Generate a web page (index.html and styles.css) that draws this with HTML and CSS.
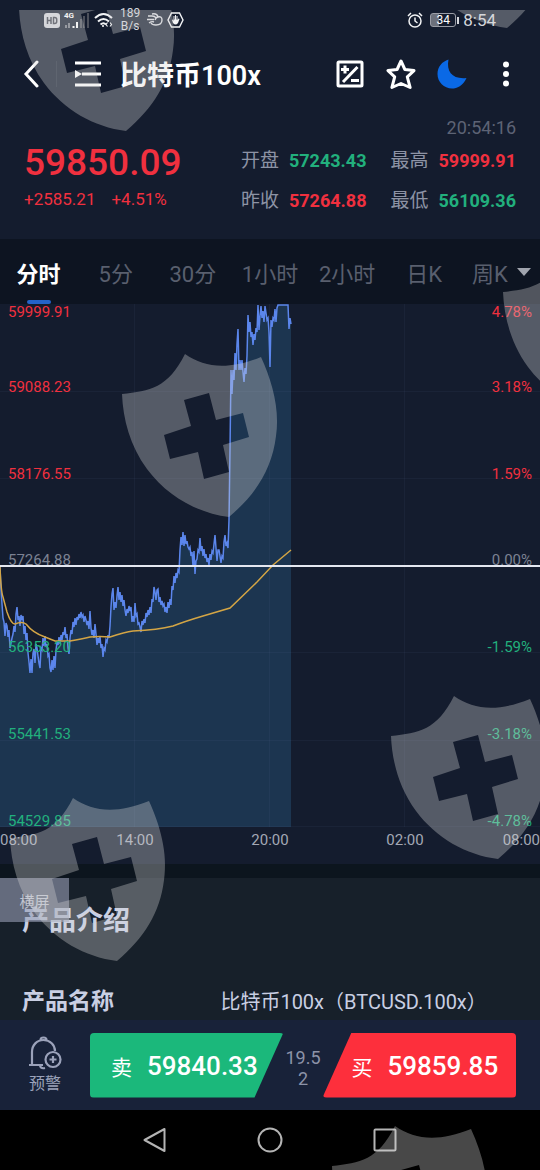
FILE: index.html
```html
<!DOCTYPE html>
<html lang="zh-CN">
<head>
<meta charset="UTF-8" />
<meta name="viewport" content="width=device-width, initial-scale=1" />
<title>比特币100x</title>
<link rel="stylesheet" href="styles.css">
</head>
<body>
<div class="app">
    <div class="status-bar">
        <svg class="status-icon" width="16" height="15" viewBox="0 0 16 15">
            <rect width="16" height="15" rx="3" fill="#d5d7dc" />
            <path d="M3.500 4v7M7 4v7M3.500 7.500H7M9.500 4.500v6h1.200q2 0 2-2v-2q0-2-2-2z" fill="none" stroke="#3d414c" stroke-width="1.500" />
        </svg>
        <div class="signal">
            <span>4G</span>
            <svg width="26" height="17" viewBox="0 0 26 17">
                <path d="M2 13v3M5 11v5" stroke="#777b85" stroke-width="2" />
                <path d="M9.500 14v2M13 10v6" stroke="#fff" stroke-width="2" />
                <path d="M17 7v9M20 4v12M24 1v15" stroke="#4d515c" stroke-width="2" />
            </svg>
        </div>
        <svg class="status-icon" width="19" height="16" viewBox="0 0 19 16" fill="none" stroke="#f2f3f5" stroke-width="2">
            <path d="M1 6Q9.500-2 18 6M4 9.500q5.500-5 11 0M6.500 12.500q3-2.500 5.500 0" />
            <circle cx="9" cy="14" r="1" fill="#fff" stroke="none" />
            <path d="M13.500 10.500l-1.500 2 1.500 2M16 10.500l1.500 2-1.500 2" stroke-width="1.200" />
        </svg>
        <div class="net-speed">189<br>B/s</div>
        <svg class="status-icon" width="16" height="14" viewBox="0 0 16 14" fill="none" stroke="#d9dbe0" stroke-width="1.400">
            <path d="M1 3h4q3 0 4 2M0 6.500h7M2 10q3-2 5-1M5 1q5-1 6 3 4-1 4 3 0 5-6 5-4 0-5-2M11 4q-2 0-3 3" />
        </svg>
        <svg class="status-icon" width="17" height="16" viewBox="0 0 17 16">
            <path d="M4.500 1h8L16 8l-3.500 7h-8L1 8z" fill="none" stroke="#f2f3f5" stroke-width="1.400" />
            <path d="M5 8l1 3q2.500 3 5 0l1.500-4-1-.500-1 1.500V4h-1v3.500H9V3H8v4.500h-.500V4h-1v5L6 7.500z" fill="#f2f3f5" />
        </svg>
        <div class="status-right">
            <svg width="16" height="16" viewBox="0 0 16 16" fill="none" stroke="#f2f3f5" stroke-width="1.500">
                <circle cx="8" cy="9" r="6" />
                <path d="M8 5.500V9l2.500 2M1 4l3-3M12 1l3 3" />
            </svg>
            <div class="battery"><span>34</span></div>
            <span class="clock">8:54</span>
        </div>
    </div>

    <header class="title-bar">
        <button class="icon-btn" aria-label="返回">
            <svg width="16" height="28" viewBox="0 0 16 28"><path d="M14 2L3 14l11 12" fill="none" stroke="#fff" stroke-width="3" stroke-linecap="round" /></svg>
        </button>
        <span class="divider"></span>
        <button class="icon-btn" aria-label="列表">
            <svg width="28" height="26" viewBox="0 0 28 26"><path d="M1 2h26M8 13h19M1 24h26" stroke="#fff" stroke-width="3" /><path d="M1 9l7 4-7 4z" fill="#fff" /></svg>
        </button>
        <h1>比特币100x</h1>
        <div class="tools">
            <button class="icon-btn" aria-label="点差">
                <svg width="28" height="28" viewBox="0 0 28 28" fill="none" stroke="#fff" stroke-width="3">
                    <rect x="2" y="2" width="24" height="24" rx="1" />
                    <path d="M7 22L21.500 7M5 9.500h8M9 5.500v8M15 20.500h8" />
                </svg>
            </button>
            <button class="icon-btn" aria-label="收藏">
                <svg width="30" height="31" viewBox="0 0 30 31"><path d="M15 2l3.900 8.500 9.100 1.100-6.700 6.300 2.800 10.600L15 24.500l-9.100 4 2.800-10.600L2 11.600l9.100-1.100z" fill="none" stroke="#fff" stroke-width="3" stroke-linejoin="round" /></svg>
            </button>
            <button class="icon-btn" aria-label="夜间模式">
                <svg width="30" height="30" viewBox="0 0 30 30"><path d="M11.500.500C9 13 16 20.500 29.500 19 26 27 20 29.500 15 29.500 7 29.500.500 23 .500 15 .500 8 5 2.500 11.500.500z" fill="#0a69e6" /></svg>
            </button>
            <button class="icon-btn more" aria-label="更多">
                <svg width="6" height="26" viewBox="0 0 6 26" fill="#fff"><circle cx="3" cy="3.500" r="3" /><circle cx="3" cy="13" r="3" /><circle cx="3" cy="22.500" r="3" /></svg>
            </button>
        </div>
    </header>

    <section class="quote">
        <div class="quote-time">20:54:16</div>
        <div class="quote-body">
            <div class="last">
                <div class="last-price">59850.09</div>
                <div class="last-change"><span>+2585.21</span><span>+4.51%</span></div>
            </div>
            <dl class="stats">
                <dt>开盘</dt><dd class="up">57243.43</dd>
                <dt>最高</dt><dd class="down">59999.91</dd>
                <dt>昨收</dt><dd class="down">57264.88</dd>
                <dt>最低</dt><dd class="up">56109.36</dd>
            </dl>
        </div>
    </section>

    <nav class="tabs">
        <button class="tab active">分时</button>
        <button class="tab">5分</button>
        <button class="tab">30分</button>
        <button class="tab">1小时</button>
        <button class="tab">2小时</button>
        <button class="tab">日K</button>
        <button class="tab">周K<i class="caret"></i></button>
    </nav>

    <section class="chart">
        <div class="plot">
            <div class="scale">
                <div class="band first">
                    <div class="pair down"><span>59999.91</span><span>4.78%</span></div>
                    <div class="pair down"><span>59088.23</span><span>3.18%</span></div>
                </div>
                <div class="band"><div class="pair down"><span>58176.55</span><span>1.59%</span></div></div>
                <div class="band"><div class="pair flat"><span>57264.88</span><span>0.00%</span></div></div>
                <div class="band"><div class="pair up"><span>56353.20</span><span>-1.59%</span></div></div>
                <div class="band"><div class="pair up"><span>55441.53</span><span>-3.18%</span></div></div>
                <div class="band"><div class="pair up"><span>54529.85</span><span>-4.78%</span></div></div>
            </div>
            <svg class="lines" viewBox="0 0 540 523" preserveAspectRatio="none">
                <path class="area" id="area" />
                <path class="grid" d="M0 87.500H540M0 174.500H540M0 348.500H540M0 436.500H540M0 522.500H540M134.500 0V523M269.500 0V523M404.500 0V523" />
                <path class="price-line" id="priceLine" />
                <path class="average" d="M0 263Q1 288 3 293L7 308Q11 320 15 320 22 317 26 320 33 329 45 333L55 337H70Q82 335 90 333 100 332 110 333 125 328 133 327 158 326 173 322 186 317 203 312L230 304 257 278 273 261 291 246" />
                <path class="zero" d="M0 262H540" />
            </svg>
        </div>
        <div class="hours">
            <span>08:00</span><span>14:00</span><span>20:00</span><span>02:00</span><span>08:00</span>
        </div>
    </section>

    <section class="product">
        <button class="rotate-btn">横屏</button>
        <h2>产品介绍</h2>
        <div class="product-row">
            <span class="product-label">产品名称</span>
            <span>比特币100x（BTCUSD.100x）</span>
        </div>
    </section>

    <footer class="trade-bar">
        <button class="alert-btn">
            <svg width="34" height="34" viewBox="0 0 34 34" fill="none" stroke="#9ba2ba" stroke-width="2.200">
                <path d="M1 29h14M4 29V16C4 9 9 4 15.500 4S27 9 27 15M12.500 4q0-2.500 3-2.500t3 2.500M12 30q1 3 5 2" />
                <circle cx="25" cy="23.500" r="7.500" />
                <path d="M25 20v7M21.500 23.500h7" />
            </svg>
            <span>预警</span>
        </button>
        <button class="trade sell"><span>卖</span><b>59840.33</b></button>
        <div class="spread">19.52</div>
        <button class="trade buy"><span>买</span><b>59859.85</b></button>
    </footer>

    <div class="system-nav">
        <svg width="24" height="26" viewBox="0 0 24 26"><path d="M21.500 2v22L1.500 13z" /></svg>
        <svg width="26" height="26" viewBox="0 0 26 26"><circle cx="13" cy="13" r="11.500" /></svg>
        <svg width="24" height="24" viewBox="0 0 24 24"><rect x="1.500" y="1.500" width="21" height="21" rx="1" /></svg>
    </div>

    <svg class="watermark" viewBox="0 0 540 1170" aria-hidden="true">
        <defs>
            <path id="shield" fill-rule="evenodd" d="M0 40C28 37 46 34 63 0 83 14 107 16 139 3 150 27 158 55 154 82 150 115 134 140 107 163 75 159 45 142 25 115 8 92 1 65 0 40zM62 46L69 72 42 81 48 105 76 98 82 125 107 118 101 91 127 83 121 59 94 66 87 39z" />
            <clipPath id="page"><rect y="10" width="540" height="1160" /></clipPath>
        </defs>
        <g clip-path="url(#page)">
            <use href="#shield" x="19" y="-32" />
            <use href="#shield" x="400" y="-135" />
            <use href="#shield" x="503" y="252" />
            <use href="#shield" x="122" y="354" />
            <use href="#shield" x="391" y="696" />
            <use href="#shield" x="10" y="798" />
            <use href="#shield" x="332" y="1126" />
        </g>
    </svg>
</div>

<script>
// x y pairs of the intraday price
const points = [
    '0 263 1 285 2 300 3 314 4 318 5 332 6 319 7 322 8 333 9 326 10 344 12 334 13 330 14 322 15 328 16 310 17 303 18 316 19 312 20 322',
    '21 311 22 316 23 312 24 330 25 322 26 336 27 329 28 349 29 358 30 369 31 355 32 369 33 349 34 345 35 359 36 340 37 344 38 352',
    '39 359 40 364 41 344 42 346 43 334 44 342 45 332 46 343 47 340 48 352 49 350 50 364 51 368 52 356 53 366 54 352 55 364 56 346',
    '57 338 58 341 59 333 60 340 61 331 62 336 63 328 64 331 65 323 66 334 67 330 68 344 69 350 70 334 71 326 72 330 73 318 74 323',
    '75 314 76 321 77 313 78 316 79 310 80 314 81 308 82 313 83 311 84 318 85 312 86 316 87 321 88 317 89 325 90 307 91 324 92 331',
    '93 326 94 334 95 320 96 330 97 341 98 334 99 339 100 332 101 344 102 340 103 353 104 344 105 346 106 336 107 338 108 331 109 334',
    '110 322 111 303 112 290 113 284 114 306 115 298 116 304 117 292 118 283 119 296 120 288 121 298 122 291 123 302 124 296 125 306',
    '126 312 127 305 128 309 129 302 130 307 131 303 132 318 133 312 134 318 135 299 136 312 137 310 138 320 139 319 140 323 141 328',
    '142 317 143 321 144 315 145 319 146 309 147 313 148 306 149 311 150 303 151 309 152 295 153 298 154 283 155 288 156 296 157 286',
    '158 285 159 298 160 293 161 301 162 297 163 302 164 300 165 308 166 303 167 309 168 298 169 304 170 295 171 301 172 282 173 286',
    '174 272 175 279 176 269 177 274 178 266 179 268 180 246 181 233 182 241 183 228 184 242 185 231 186 240 187 237 188 243 189 245',
    '190 243 191 252 192 248 193 262 194 247 195 270 196 257 197 255 198 246 199 248 200 234 201 247 202 242 203 252 204 245 205 254',
    '206 250 207 258 208 254 209 261 210 250 211 256 212 247 213 249 214 240 215 231 216 244 217 257 218 246 219 246 220 252 221 259',
    '222 252 223 254 224 238 225 231 226 242 227 239 228 244 229 216 230 146 231 66 232 90 233 66 234 76 235 49 236 66 237 40 238 25',
    '239 66 240 56 241 66 242 56 243 68 244 78 245 64 246 70 247 52 248 11 249 28 250 18 251 33 252 28 253 41 254 30 255 36 256 24',
    '257 28 258 1 259 26 260 12 261 2 262 14 263 7 264 18 265 2 266 9 267 16 268 14 269 28 270 63 271 16 272 23 273 14 274 16 275 5',
    '276 18 277 4 278 1 288 1 289 25 290 14 291 20'
].join(' ');
const line = 'M' + points;
document.getElementById('priceLine').setAttribute('d', line);
document.getElementById('area').setAttribute('d', line + 'V523H0z');
</script>
</body>
</html>
```
FILE: styles.css
```css
* {
    box-sizing: border-box;
}
body {
    margin: 0;
    background: #000;
    color: #fff;
    font-family: Roboto, "Noto Sans CJK SC", sans-serif;
}
h1, h2, dl, dd {
    margin: 0;
}
button {
    padding: 0;
    border: none;
    background: none;
    color: inherit;
    font: inherit;
    cursor: pointer;
}
svg {
    display: block;
    flex: none;
}
.app {
    position: relative;
    overflow: hidden;
    background: #141c2e;
}
.up {
    color: #22b07d;
}
.down {
    color: #f0303f;
}
.flat {
    color: #7c8292;
}

/* status bar */
.status-bar {
    display: flex;
    align-items: center;
    gap: 4px;
    height: 40px;
    padding: 0 44px;
}
.signal {
    display: grid;
    align-items: end;
}
.signal span,
.signal svg {
    grid-area: 1 / 1;
}
.signal span {
    align-self: start;
    font-size: 8px;
    line-height: 8px;
    font-weight: bold;
}
.net-speed {
    padding: 0 3px;
    font-size: 12px;
    line-height: 13px;
    text-align: center;
    color: #d5d7dc;
}
.status-right {
    display: flex;
    align-items: center;
    gap: 7px;
    margin-left: auto;
}
.battery {
    position: relative;
    width: 26px;
    height: 14px;
    border: 1px solid #9a9da6;
    border-radius: 3px;
    background: linear-gradient(to right, #6c707b 34%, transparent 34%);
    font-size: 12px;
    line-height: 12px;
    text-align: center;
}
.battery::after {
    content: "";
    position: absolute;
    right: -4px;
    top: 3px;
    width: 2px;
    height: 7px;
    background: #d5d7dc;
}
.clock {
    font-size: 17px;
    color: #d5d7dc;
}

/* title bar */
.title-bar {
    display: flex;
    align-items: center;
    height: 68px;
    padding: 0 15px;
}
.icon-btn {
    display: flex;
    justify-content: center;
    align-items: center;
    width: 31px;
    height: 40px;
}
.divider {
    width: 1px;
    height: 26px;
    margin: 0 15px 0 10px;
    background: #232b3c;
}
h1 {
    margin-left: 17px;
    padding-top: 4px;
    font-size: 27px;
    line-height: 36px;
    font-weight: 600;
}
.tools {
    display: flex;
    gap: 20px;
    margin-left: auto;
}
.more {
    width: 38px;
}

/* quote */
.quote {
    padding: 10px 24px 18px;
}
.quote-time {
    margin-bottom: 3px;
    font-size: 18px;
    line-height: 20px;
    text-align: right;
    color: #5d6375;
}
.quote-body {
    display: flex;
    justify-content: space-between;
}
.last {
    color: #f0303f;
}
.last-price {
    font-size: 37px;
    line-height: 44px;
    font-weight: 500;
}
.last-change {
    display: flex;
    gap: 16px;
    font-size: 17px;
    line-height: 28px;
}
.stats {
    display: grid;
    grid-template-columns: repeat(4, auto);
    font-size: 19px;
    line-height: 40px;
}
.stats dt {
    color: #8d93a5;
}
.stats dd {
    margin-left: 10px;
    font-size: 18px;
    font-weight: bold;
}
.stats dd:nth-of-type(odd) {
    margin-right: 24px;
}

/* period tabs */
.tabs {
    display: flex;
    background: #0d1421;
}
.tab {
    position: relative;
    display: flex;
    flex: 1 1 0;
    justify-content: center;
    align-items: center;
    height: 65px;
    font-size: 22px;
    color: #595f6e;
    white-space: nowrap;
}
.tab.active {
    color: #fff;
    font-weight: bold;
}
.tab.active::after {
    content: "";
    position: absolute;
    bottom: 0;
    width: 24px;
    height: 4px;
    border-radius: 2px;
    background: #2463c8;
}
.caret {
    margin-left: 9px;
    border: 7px solid transparent;
    border-top: 8px solid #a0a4ae;
    border-bottom: 0;
}

/* chart */
.plot {
    display: grid;
    height: 523px;
}
.scale,
.lines {
    grid-area: 1 / 1;
    width: 100%;
    height: 523px;
}
.scale {
    display: flex;
    flex-direction: column;
    padding: 0 8px;
    font-size: 15px;
    line-height: 12px;
    z-index: 1;
}
.band {
    display: flex;
    flex: 1;
    flex-direction: column;
    justify-content: flex-end;
}
.band.first {
    justify-content: space-between;
    padding-top: 2px;
}
.pair {
    display: flex;
    justify-content: space-between;
}
.lines path {
    fill: none;
    vector-effect: non-scaling-stroke;
}
.lines .area {
    fill: #1c3550;
}
.lines .grid {
    stroke: #8aa0c8;
    stroke-opacity: 0.06;
}
.lines .price-line {
    stroke: #5b86ec;
    stroke-width: 1.5;
}
.lines .average {
    stroke: #d3a545;
    stroke-width: 1.5;
}
.lines .zero {
    stroke: #e4e7f0;
    stroke-width: 2;
}
.hours {
    display: grid;
    grid-template-columns: 1fr 2fr 2fr 2fr 1fr;
    height: 37px;
    font-size: 15px;
    line-height: 27px;
    text-align: center;
    color: #a3a8b5;
}
.hours span:first-child {
    text-align: left;
}
.hours span:last-child {
    text-align: right;
}

/* product intro */
.product {
    position: relative;
    padding: 25px 22px 3px;
    border-top: 14px solid #0c151e;
    background: #17202a;
    color: #c9cfe3;
}
.rotate-btn {
    position: absolute;
    left: 0;
    top: 0;
    width: 69px;
    height: 44px;
    background: rgba(152, 158, 182, 0.6);
    color: #c0c4d0;
    font-size: 15px;
}
h2 {
    font-size: 27px;
    line-height: 36px;
    font-weight: 600;
}
.product-row {
    display: grid;
    grid-template-columns: 2fr 3fr;
    margin-top: 48px;
    font-size: 20px;
    line-height: 30px;
}
.product-label {
    font-size: 23px;
    font-weight: bold;
}

/* trade bar */
.trade-bar {
    display: grid;
    grid-template-columns: 90px 1fr 39px 1fr;
    align-items: center;
    height: 90px;
    padding-right: 24px;
    background: #182239;
}
.alert-btn {
    display: flex;
    flex-direction: column;
    align-items: center;
    gap: 3px;
    color: #9ba2ba;
    font-size: 16px;
    line-height: 22px;
}
.trade {
    display: flex;
    align-items: center;
    gap: 15px;
    height: 65px;
    padding-top: 2px;
    border-radius: 4px;
    font-size: 21px;
}
.trade b {
    font-size: 26px;
    font-weight: 500;
}
.sell {
    padding-left: 21px;
    background: #1bb87b;
    clip-path: polygon(0 0, 100% 0, calc(100% - 29px) 100%, 0 100%);
}
.buy {
    padding-left: 29px;
    background: #fd2f3c;
    clip-path: polygon(29px 0, 100% 0, 100% 100%, 0 100%);
}
.spread {
    padding-top: 6px;
    font-size: 18px;
    line-height: 21px;
    text-align: center;
    word-break: break-all;
    color: #8c93a8;
}

/* system navigation */
.system-nav {
    display: flex;
    justify-content: center;
    align-items: center;
    gap: 90px;
    height: 60px;
    background: #000;
}
.system-nav svg {
    fill: none;
    stroke: #b4b4b4;
    stroke-width: 2;
    stroke-linejoin: round;
}

.watermark {
    position: absolute;
    left: 0;
    top: 0;
    z-index: 2;
    width: 100%;
    fill: #dadada;
    opacity: 0.33;
    pointer-events: none;
}
```
